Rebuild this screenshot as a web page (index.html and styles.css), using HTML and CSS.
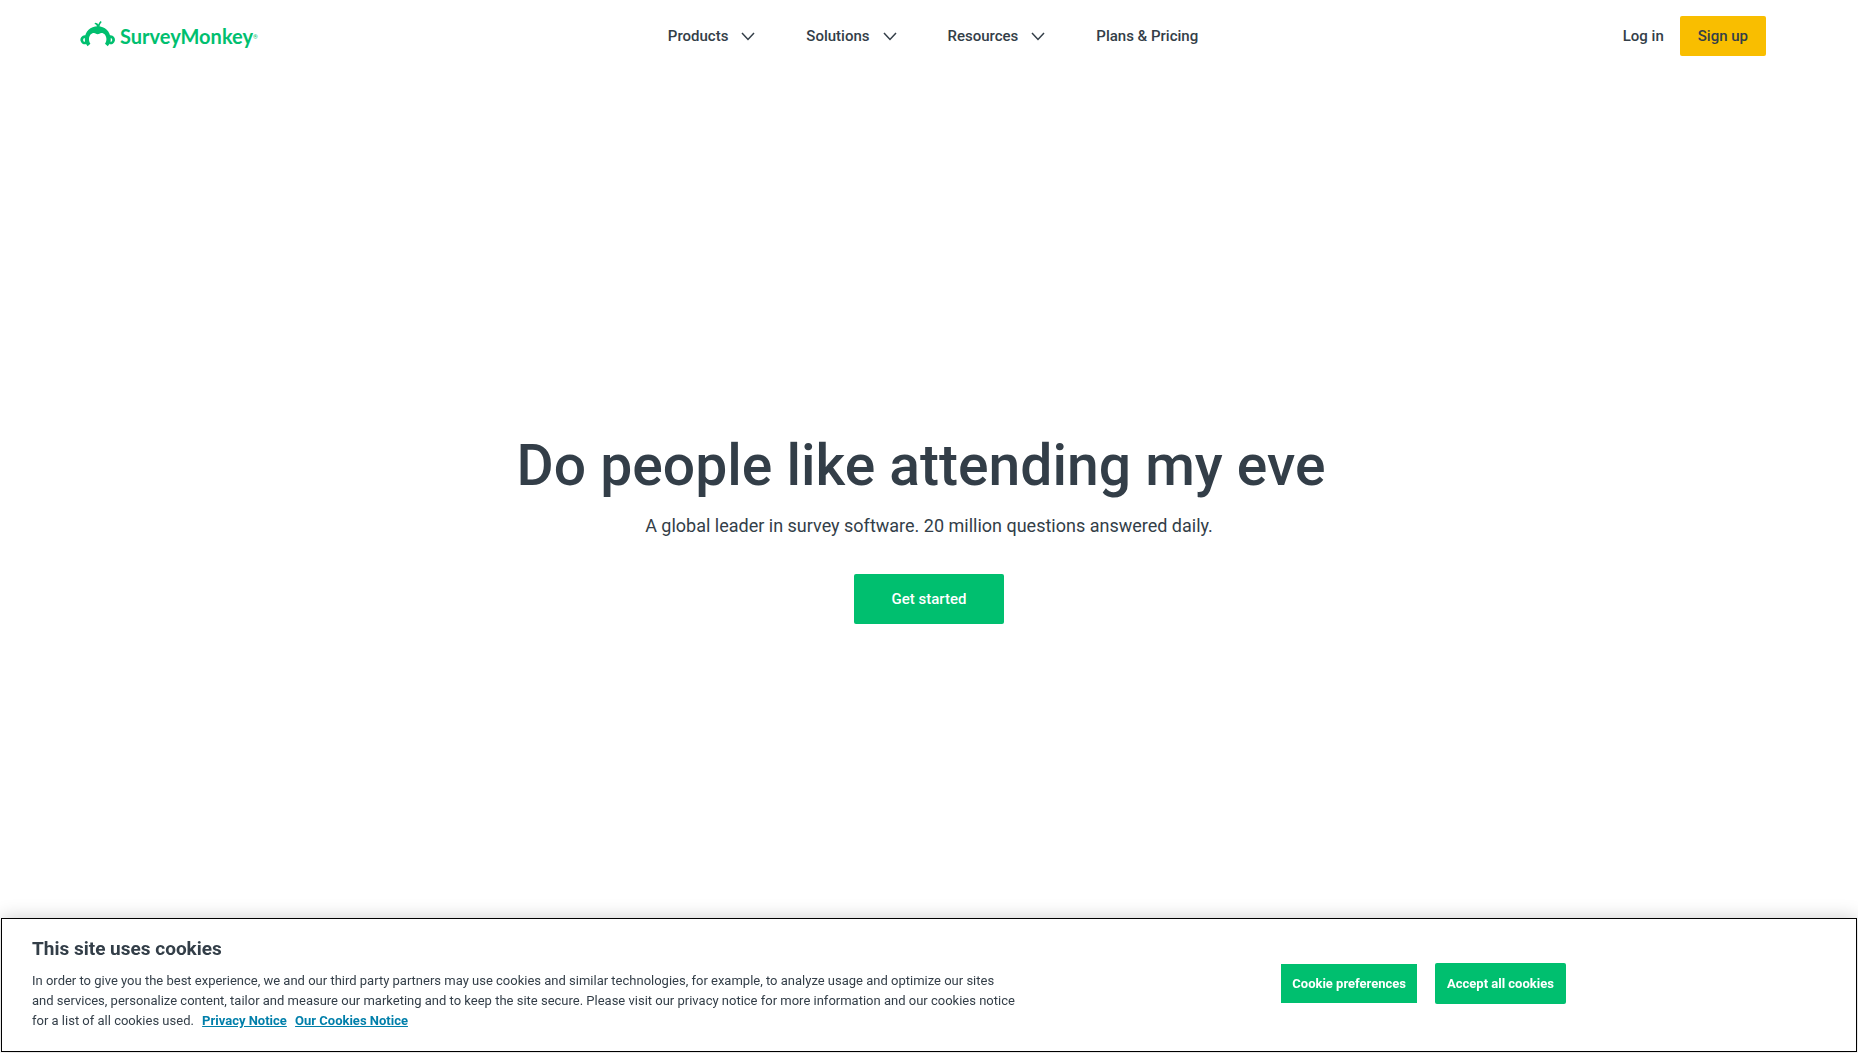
FILE: index.html
```
<!DOCTYPE html>
<html lang="en">
<head>
    <meta charset="UTF-8">
    <meta name="viewport" content="width=device-width, initial-scale=1.0">
    <title>SurveyMonkey</title>
    <link rel="stylesheet" href="styles.css">
</head>
<body>

    <header class="site-header">
        <a href="#" class="logo">
            <svg class="logo-mark" viewBox="0 0 36 26" aria-hidden="true">
                <g fill="#00bf6f">
                    <path d="M17.700 5.200C10.500 5.200 5 10.500 4.800 17.500C4.700 20.500 5.800 23.200 7.600 25.200L10.400 22.800C9.300 21.300 8.900 19.600 9 17.800C9.200 14.300 11.300 12 13.900 12C15.700 12 16.400 13.300 17.700 13.300C19 13.300 19.700 12 21.500 12C24.100 12 26.200 14.300 26.400 17.800C26.500 19.600 26.100 21.300 25 22.800L27.800 25.200C29.600 23.200 30.700 20.500 30.600 17.500C30.400 10.500 24.900 5.200 17.700 5.200Z"/>
                    <path fill-rule="evenodd" d="M4.700 14.300a4.500 4.500 0 1 0 1.500 8.800V14.600a4.500 4.500 0 0 0-1.500-.3ZM5 17a1.900 1.900 0 0 0 0 3.800Z"/>
                    <path fill-rule="evenodd" d="M30.700 14.300a4.500 4.500 0 1 1-1.500 8.800V14.600a4.500 4.500 0 0 1 1.500-.3ZM30.400 17a1.900 1.900 0 0 1 0 3.800Z"/>
                    <path d="M17 6C16.900 4.400 16 3.400 14.500 3.100L15.100 1.800C16.700 1.900 17.700 2.600 18.300 3.500C18.700 2.200 19.500 1.100 20.500 0L21.700 1C20.300 2.500 19.600 4 19.600 6Z"/>
                </g>
            </svg>
            <span class="logo-text">SurveyMonkey</span><span class="logo-reg">®</span>
        </a>

        <nav class="main-nav">
            <button type="button" class="nav-item">Products
                <svg class="chevron" viewBox="0 0 14 9" aria-hidden="true"><path d="M1 1l6 6.500L13 1"/></svg>
            </button>
            <button type="button" class="nav-item">Solutions
                <svg class="chevron" viewBox="0 0 14 9" aria-hidden="true"><path d="M1 1l6 6.500L13 1"/></svg>
            </button>
            <button type="button" class="nav-item">Resources
                <svg class="chevron" viewBox="0 0 14 9" aria-hidden="true"><path d="M1 1l6 6.500L13 1"/></svg>
            </button>
            <a href="#" class="nav-item">Plans &amp; Pricing</a>
        </nav>

        <div class="account">
            <a href="#" class="login">Log in</a>
            <a href="#" class="signup">Sign up</a>
        </div>
    </header>

    <main class="hero">
        <h1>Do people like attending my eve</h1>
        <p>A global leader in survey software. 20 million questions answered daily.</p>
        <a href="#" class="get-started">Get started</a>
    </main>

    <section class="cookie-banner" aria-labelledby="cookie-title">
        <div class="cookie-text">
            <h2 id="cookie-title">This site uses cookies</h2>
            <p>In order to give you the best experience, we and our third party partners may use cookies and similar technologies, for example, to analyze usage and optimize our sites and services, personalize content, tailor and measure our marketing and to keep the site secure. Please visit our privacy notice for more information and our cookies notice for a list of all cookies used. <a href="#">Privacy Notice</a> <a href="#">Our Cookies Notice</a></p>
        </div>
        <div class="cookie-buttons">
            <button type="button" class="btn-preferences">Cookie preferences</button>
            <button type="button" class="btn-accept">Accept all cookies</button>
        </div>
    </section>

</body>
</html>
```
FILE: styles.css
```
* {
    box-sizing: border-box;
}
body {
    font-family: Roboto, "Liberation Sans", sans-serif;
    color: #333e48;
    background-color: #ffffff;
    margin: 0;
    min-height: 100vh;
    display: flex;
    flex-direction: column;
}
a {
    color: inherit;
    text-decoration: none;
}
button {
    font-family: inherit;
    color: inherit;
    border: none;
    cursor: pointer;
}
.site-header {
    display: grid;
    grid-template-columns: 1fr auto 1fr;
    align-items: center;
    height: 72px;
    padding: 0 92px 0 80px;
}
.logo {
    display: flex;
    align-items: center;
    color: #00bf6f;
}
.logo-mark {
    width: 36px;
    height: 26px;
    margin: 0 4px 5px 0;
}
.logo-text {
    font-family: Lato, sans-serif;
    font-size: 20px;
    font-weight: 700;
    line-height: 28px;
}
.logo-reg {
    font-size: 6px;
}
.main-nav {
    display: flex;
    gap: 51px;
    padding-left: 20px;
}
.nav-item {
    display: flex;
    align-items: center;
    gap: 13px;
    padding: 0;
    background: none;
    font-size: 15px;
    font-weight: 500;
    line-height: 24px;
}
.chevron {
    width: 14px;
    height: 9px;
    fill: none;
    stroke: #333e48;
    stroke-width: 1.5;
}
.account {
    display: flex;
    justify-content: flex-end;
    align-items: center;
    gap: 16px;
    font-size: 15px;
    font-weight: 500;
}
.signup {
    padding: 0 18px;
    line-height: 40px;
    background-color: #f9be00;
    border-radius: 2px;
}
.hero {
    flex: 1;
    display: flex;
    flex-direction: column;
    align-items: center;
    justify-content: center;
    padding-bottom: 72px;
    text-align: center;
}
.hero h1 {
    margin: 0 0 12px;
    padding-right: 16px;
    font-size: 57px;
    font-weight: 500;
    line-height: 72px;
}
.hero p {
    margin: 0 0 36px;
    font-size: 18px;
    line-height: 24px;
}
.get-started {
    padding: 0 38px;
    background-color: #00bf6f;
    color: #ffffff;
    border-radius: 2px;
    font-size: 15px;
    font-weight: 500;
    line-height: 50px;
}
.cookie-banner {
    position: fixed;
    left: 1px;
    right: 1px;
    bottom: 1px;
    display: flex;
    align-items: center;
    padding: 16px 30px 20px;
    background-color: #ffffff;
    border: 1px solid #000000;
    box-shadow: 0 0 18px rgba(0, 0, 0, 0.2);
}
.cookie-text {
    width: 55%;
}
.cookie-text h2 {
    margin: 0 0 8px;
    font-size: 19px;
    font-weight: 700;
    line-height: 28px;
}
.cookie-text p {
    margin: 0;
    font-size: 13px;
    line-height: 20px;
}
.cookie-text a {
    margin-left: 5px;
    color: #007faa;
    font-weight: 700;
    text-decoration: underline;
}
.cookie-buttons {
    display: flex;
    align-items: center;
    gap: 18px;
    margin-left: auto;
    margin-right: 14.5%;
}
.cookie-buttons button {
    background-color: #00bf6f;
    color: #ffffff;
    font-size: 13px;
    font-weight: 700;
}
.btn-preferences {
    height: 39px;
    padding: 0 11px;
}
.btn-accept {
    height: 41px;
    padding: 0 12px;
    border-radius: 2px;
}
```
